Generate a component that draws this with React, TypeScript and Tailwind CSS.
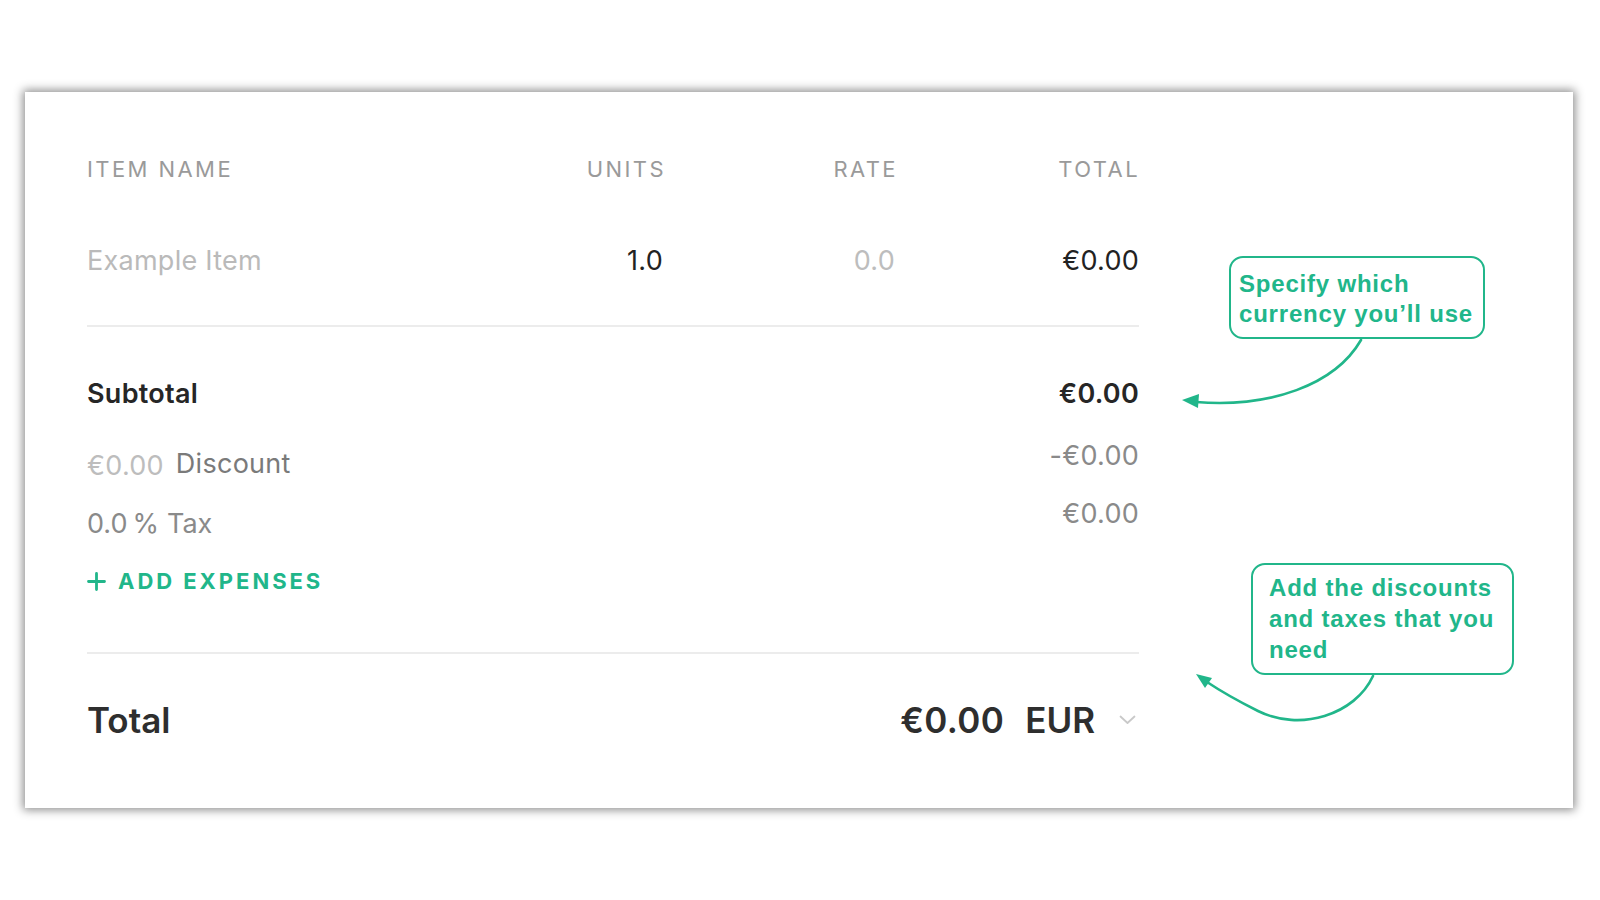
import React from "react";

const GREEN = "#21b68a";

function Plus() {
  return (
    <svg width="19" height="19" viewBox="0 0 19 19" className="mr-[12px]">
      <path d="M9.5 1.5v16M1.5 9.5h16" stroke={GREEN} strokeWidth="2.8" strokeLinecap="round" />
    </svg>
  );
}

function Chevron() {
  return (
    <svg width="17" height="10" viewBox="0 0 17 10">
      <path d="M1.5 1.5l7 6.5 7-6.5" fill="none" stroke="#c9c9c9" strokeWidth="1.8" strokeLinecap="round" strokeLinejoin="round" />
    </svg>
  );
}

export default function App() {
  return (
    <div
      className="relative w-[1600px] h-[900px] bg-white overflow-hidden"
      style={{ fontFamily: "Inter, 'Noto Sans', sans-serif" }}
    >
      <div className="pt-[92px] pl-[25px]">
        <div className="w-[1548px] h-[716px] bg-white shadow-[0_0_9px_2px_rgba(0,0,0,0.45)] pl-[62px] pt-[62px]">
          <div className="w-[1052px]">
            {/* header */}
            <div className="grid grid-cols-[406px_170px_232px_244px] h-[30px] items-center text-[22px] tracking-[0.11em] text-[#9a9a9a] leading-[30px]">
              <div>ITEM NAME</div>
              <div className="text-right mr-[-3px]">UNITS</div>
              <div className="text-right mr-[-3px]">RATE</div>
              <div className="text-right mr-[-1px]">TOTAL</div>
            </div>
            {/* item row */}
            <div className="mt-[57px] grid grid-cols-[406px_170px_232px_244px] h-[40px] items-center text-[27px] tracking-[0.01em] leading-[40px]">
              <div className="text-[#bababa]">Example Item</div>
              <div className="text-right text-[#222]">1.0</div>
              <div className="text-right text-[#bdbdbd]">0.0</div>
              <div className="text-right text-[#222]">€0.00</div>
            </div>
            <div className="mt-[44px] h-[2px] bg-[#ececec]" />
            {/* subtotal */}
            <div className="mt-[49px] flex justify-between items-center h-[36px] leading-[36px] text-[27px] font-semibold tracking-[0.01em] text-[#262626]">
              <div>Subtotal</div>
              <div>€0.00</div>
            </div>
            {/* discount */}
            <div className="mt-[32px] flex justify-between items-start">
              <div className="h-[40px] flex items-center text-[27px] tracking-[0.01em]">
                <span className="text-[#bdbdbd] mt-[4px]">€0.00</span>
                <span className="ml-[12px] text-[#7a7a7a]">Discount</span>
              </div>
              <div className="leading-[24px] text-[27px] tracking-[0.01em] text-[#8a8a8a]">-€0.00</div>
            </div>
            {/* tax */}
            <div className="mt-[20px] flex justify-between items-start">
              <div className="h-[40px] flex items-center text-[27px] text-[#8a8a8a]">
                0.0<span className="ml-[5px]">%</span>
                <span className="ml-[8px]">Tax</span>
              </div>
              <div className="-mt-[2px] leading-[24px] text-[27px] tracking-[0.01em] text-[#8a8a8a]">€0.00</div>
            </div>
            {/* add expenses */}
            <div className="mt-[23px] h-[28px] flex items-center">
              <Plus />
              <span className="text-[22px] font-bold tracking-[0.135em] leading-[28px]" style={{ color: GREEN }}>
                ADD EXPENSES
              </span>
            </div>
            <div className="mt-[57px] h-[2px] bg-[#ececec]" />
            {/* total */}
            <div className="mt-[44px] flex justify-between items-center h-[44px] text-[#2e2e2e]">
              <div className="text-[35px] font-semibold leading-[44px]">Total</div>
              <div className="flex items-center pr-[3px]">
                <span className="text-[35px] font-semibold leading-[44px] tracking-[0.01em]">€0.00</span>
                <span className="ml-[21px] text-[35px] font-semibold leading-[44px]">EUR</span>
                <span className="ml-[24px] flex items-center">
                  <Chevron />
                </span>
              </div>
            </div>
          </div>
        </div>
      </div>

      {/* callout 1 */}
      <div
        className="absolute left-[1229px] top-[256px] w-[256px] h-[83px] border-2 rounded-[14px] pl-[8px] pt-[11px] bg-white"
        style={{ borderColor: GREEN, color: GREEN, fontFamily: "'Liberation Sans', Arial, sans-serif" }}
      >
        <div className="text-[24px] font-bold leading-[30px] tracking-[0.8px] whitespace-nowrap">
          Specify which
          <br />
          currency you’ll use
        </div>
      </div>

      {/* callout 2 */}
      <div
        className="absolute left-[1251px] top-[563px] w-[263px] h-[112px] border-2 rounded-[14px] pl-[16px] pt-[7px] bg-white"
        style={{ borderColor: GREEN, color: GREEN, fontFamily: "'Liberation Sans', Arial, sans-serif" }}
      >
        <div className="text-[24px] font-bold leading-[31px] tracking-[0.8px] whitespace-nowrap">
          Add the discounts
          <br />
          and taxes that you
          <br />
          need
        </div>
      </div>

      {/* arrows */}
      <svg className="absolute left-0 top-0 pointer-events-none" width="1600" height="900" viewBox="0 0 1600 900">
        <path d="M1361 340 C 1335 385, 1270 408, 1196 402" fill="none" stroke={GREEN} strokeWidth="2.6" strokeLinecap="round" />
        <polygon points="1182,400 1199,394 1198,408" fill={GREEN} />
        <path d="M1373 676 C 1355 715, 1300 732, 1258 711 C 1238 701, 1222 692, 1207 682" fill="none" stroke={GREEN} strokeWidth="2.6" strokeLinecap="round" />
        <polygon points="1196,674 1205,688 1212,678" fill={GREEN} />
      </svg>
    </div>
  );
}
